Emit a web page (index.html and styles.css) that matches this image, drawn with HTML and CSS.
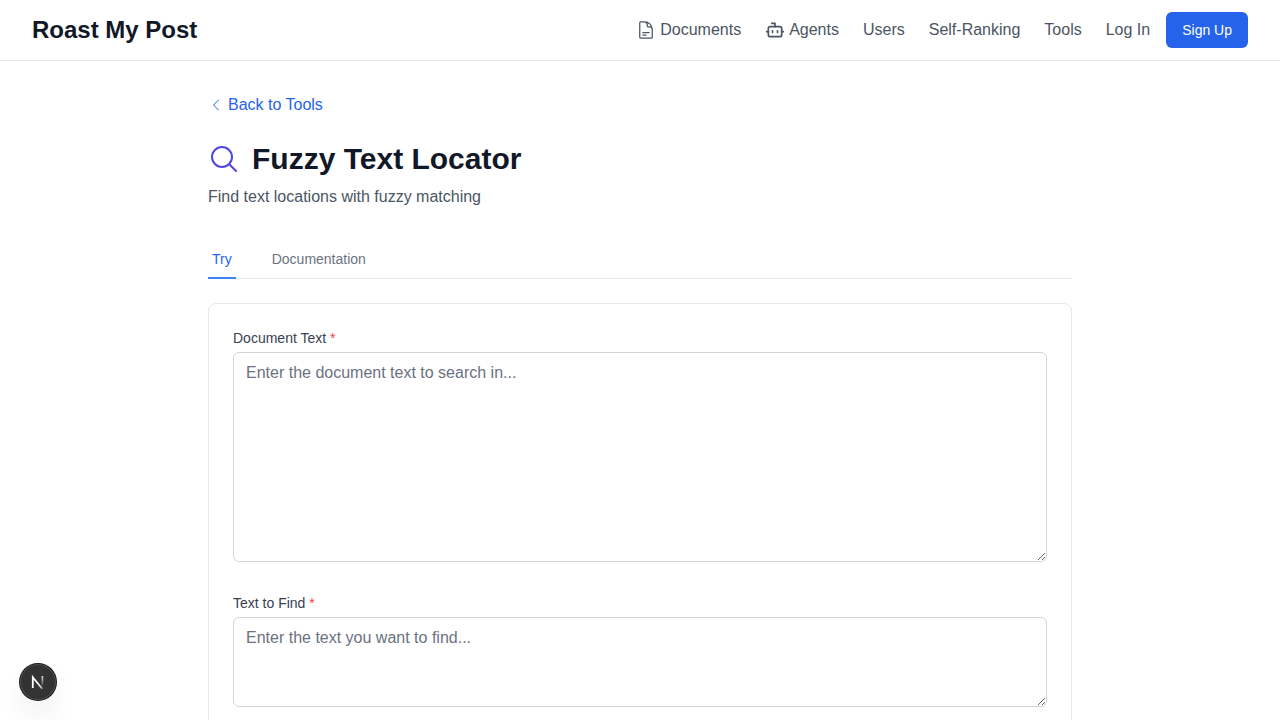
FILE: index.html
```html
<!DOCTYPE html>
<html lang="en">
<head>
<meta charset="utf-8">
<title>Fuzzy Text Locator - Roast My Post</title>
<link rel="stylesheet" href="styles.css">
</head>
<body>
<header class="header">
  <a class="brand">Roast My Post</a>
  <nav class="nav">
    <a class="nav-link"><svg class="nav-icon" viewBox="0 0 24 24" fill="none" stroke="currentColor" stroke-width="1.5" stroke-linecap="round" stroke-linejoin="round"><path d="M19.5 14.25v-2.625a3.375 3.375 0 0 0-3.375-3.375h-1.5A1.125 1.125 0 0 1 13.5 7.125v-1.5a3.375 3.375 0 0 0-3.375-3.375H8.25m0 12.75h7.5m-7.5 3H12M10.5 2.25H5.625c-.621 0-1.125.504-1.125 1.125v17.25c0 .621.504 1.125 1.125 1.125h12.75c.621 0 1.125-.504 1.125-1.125V11.25a9 9 0 0 0-9-9Z"/></svg>Documents</a>
    <a class="nav-link"><svg class="nav-icon" viewBox="0 0 24 24" fill="none" stroke="currentColor" stroke-width="2" stroke-linecap="round" stroke-linejoin="round"><path d="M12 8V4H8"/><rect width="16" height="12" x="4" y="8" rx="2"/><path d="M2 14h2M20 14h2M15 13v2M9 13v2"/></svg>Agents</a>
    <a class="nav-link">Users</a>
    <a class="nav-link">Self-Ranking</a>
    <a class="nav-link">Tools</a>
    <div class="auth">
      <a class="nav-link">Log In</a>
      <a class="signup">Sign Up</a>
    </div>
  </nav>
</header>
<main class="main">
  <a class="back"><svg class="back-icon" viewBox="0 0 24 24" fill="none" stroke="currentColor" stroke-width="1.5" stroke-linecap="round" stroke-linejoin="round"><path d="M15.75 19.5 8.25 12l7.5-7.5"/></svg>Back to Tools</a>
  <div class="heading">
    <svg class="heading-icon" viewBox="0 0 24 24" fill="none" stroke="currentColor" stroke-width="1.5" stroke-linecap="round" stroke-linejoin="round"><path d="m21 21-5.197-5.197m0 0A7.5 7.5 0 1 0 5.196 5.196a7.5 7.5 0 0 0 10.607 10.607Z"/></svg>
    <h1 class="title">Fuzzy Text Locator</h1>
  </div>
  <p class="subtitle">Find text locations with fuzzy matching</p>
  <div class="tabs">
    <a class="tab tab-active">Try</a>
    <a class="tab">Documentation</a>
  </div>
  <form class="card">
    <div class="field">
      <label class="label" for="doc">Document Text <span class="required">*</span></label>
      <textarea class="input" id="doc" rows="8" placeholder="Enter the document text to search in..."></textarea>
    </div>
    <div class="field">
      <label class="label" for="query">Text to Find <span class="required">*</span></label>
      <textarea class="input" id="query" rows="3" placeholder="Enter the text you want to find..."></textarea>
    </div>
  </form>
</main>
<div class="dev-badge">
  <svg class="dev-icon" viewBox="0 0 36 36" fill="none">
    <defs>
      <linearGradient id="diagonal" gradientUnits="userSpaceOnUse" x1="18" y1="18" x2="23.5" y2="25"><stop stop-color="#fff"/><stop offset="0.6" stop-color="#fff" stop-opacity="0.8"/><stop offset="1" stop-color="#fff" stop-opacity="0.25"/></linearGradient>
      <linearGradient id="stem" gradientUnits="userSpaceOnUse" x1="22.4" y1="12" x2="22.4" y2="23"><stop stop-color="#fff" stop-opacity="0.85"/><stop offset="1" stop-color="#fff" stop-opacity="0"/></linearGradient>
    </defs>
    <path d="M12.8 24V13.2L22.4 25" stroke="url(#diagonal)" stroke-width="1.8"/>
    <path d="M22.4 12v12" stroke="url(#stem)" stroke-width="1.7"/>
  </svg>
</div>
</body>
</html>
```
FILE: styles.css
```css
* { box-sizing: border-box; }

body {
  margin: 0;
  height: 100vh;
  overflow: hidden;
  background: #fff;
  color: #111827;
  font: 16px/24px "Liberation Sans", Arial, sans-serif;
}

svg { display: block; flex: none; }

.header {
  display: flex;
  align-items: center;
  justify-content: space-between;
  height: 61px;
  padding: 0 32px;
  border-bottom: 1px solid #e5e7eb;
}

.brand { font-size: 24px; line-height: 32px; font-weight: 700; }
.nav { display: flex; align-items: center; gap: 24px; }
.nav-link { display: flex; align-items: center; gap: 4px; color: #4b5563; }
.nav-icon { width: 20px; height: 20px; }
.auth { display: flex; align-items: center; gap: 16px; }

.signup {
  padding: 8px 16px;
  border-radius: 6px;
  background: #2563eb;
  color: #fff;
  font-size: 14px;
  line-height: 20px;
}

.main { width: 864px; margin: 0 auto; padding-top: 32px; }

.back {
  display: flex;
  align-items: center;
  gap: 4px;
  width: max-content;
  margin-bottom: 24px;
  color: #2563eb;
}
.back-icon { width: 16px; height: 16px; }

.heading { display: flex; align-items: center; gap: 12px; margin-bottom: 8px; }
.heading-icon { width: 32px; height: 32px; color: #4f46e5; }
.title { margin: 0; font-size: 30px; line-height: 36px; font-weight: 700; }
.subtitle { margin: 0 0 32px; color: #4b5563; }

.tabs {
  display: flex;
  gap: 32px;
  margin-bottom: 24px;
  border-bottom: 1px solid #e5e7eb;
}
.tab {
  margin-bottom: -1px;
  padding: 8px 4px;
  border-bottom: 2px solid transparent;
  color: #6b7280;
  font-size: 14px;
  line-height: 20px;
}
.tab-active { border-color: #3b82f6; color: #2563eb; }

.card {
  display: flex;
  flex-direction: column;
  gap: 31px;
  padding: 24px;
  border: 1px solid #e5e7eb;
  border-radius: 8px;
}
.field { display: flex; flex-direction: column; gap: 4px; }
.label { color: #374151; font-size: 14px; line-height: 20px; }
.required { color: #ef4444; }

.input {
  width: 100%;
  margin: 0;
  padding: 8px 12px;
  border: 1px solid #d1d5db;
  border-radius: 6px;
  background: #fff;
  font: inherit;
  resize: vertical;
}
.input::placeholder { color: #6b7280; }

.dev-badge {
  position: fixed;
  left: 20px;
  bottom: 20px;
  width: 36px;
  height: 36px;
  border-radius: 50%;
  background: #333;
  box-shadow: 0 0 0 1px #171717, inset 0 0 0 1px rgba(255, 255, 255, 0.14), 0 16px 32px -8px rgba(0, 0, 0, 0.2);
}
.dev-icon { width: 36px; height: 36px; }
```
